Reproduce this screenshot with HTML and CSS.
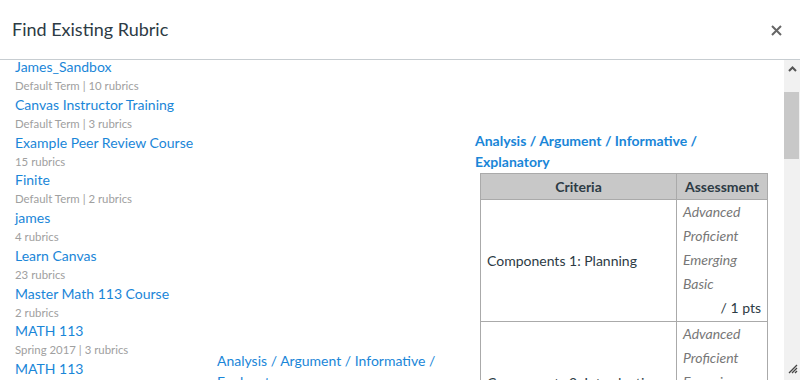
FILE: index.html
```html
<!DOCTYPE html>
<html lang="en">
  <head>
    <meta charset="UTF-8" />
    <meta name="viewport" content="width=device-width, initial-scale=1.0" />
    <title>Find Existing Rubric</title>
    <link rel="stylesheet" href="styles.css">
  </head>
  <body>
    <div class="dialog">
      <div class="dialog-header">
        <h2>Find Existing Rubric</h2>
        <button class="close" title="Close">
          <svg width="11" height="11" viewBox="0 0 11 11">
            <path d="M1 1 L10 10 M10 1 L1 10" stroke="#666" stroke-width="2" />
          </svg>
        </button>
      </div>

      <div class="dialog-body">
        <!-- contexts -->
        <ul class="contexts">
          <li><a href="#">James_Sandbox</a><span class="meta">Default Term | 10 rubrics</span></li>
          <li><a href="#">Canvas Instructor Training</a><span class="meta">Default Term | 3 rubrics</span></li>
          <li><a href="#">Example Peer Review Course</a><span class="meta">15 rubrics</span></li>
          <li><a href="#">Finite</a><span class="meta">Default Term | 2 rubrics</span></li>
          <li><a href="#">james</a><span class="meta">4 rubrics</span></li>
          <li><a href="#">Learn Canvas</a><span class="meta">23 rubrics</span></li>
          <li><a href="#">Master Math 113 Course</a><span class="meta">2 rubrics</span></li>
          <li><a href="#">MATH 113</a><span class="meta">Spring 2017 | 3 rubrics</span></li>
          <li><a href="#">MATH 113</a><span class="meta">Fall 2017 | 3 rubrics</span></li>
        </ul>

        <!-- rubrics in context -->
        <div class="rubrics">
          <a href="#" class="rubric-link">Analysis / Argument / Informative / Explanatory</a>
        </div>

        <!-- preview -->
        <div class="preview">
          <a href="#" class="preview-title">Analysis / Argument / Informative / Explanatory</a>
          <table class="rubric-table">
            <thead>
              <tr>
                <th class="col-criteria">Criteria</th>
                <th class="col-assessment">Assessment</th>
              </tr>
            </thead>
            <tbody>
              <tr>
                <td class="criterion">Components 1: Planning</td>
                <td class="ratings">
                  <div class="rating">Advanced</div>
                  <div class="rating">Proficient</div>
                  <div class="rating">Emerging</div>
                  <div class="rating">Basic</div>
                  <div class="points">/ 1 pts</div>
                </td>
              </tr>
              <tr>
                <td class="criterion">Components 2: Introduction</td>
                <td class="ratings">
                  <div class="rating">Advanced</div>
                  <div class="rating">Proficient</div>
                  <div class="rating">Emerging</div>
                  <div class="rating">Basic</div>
                  <div class="points">/ 1 pts</div>
                </td>
              </tr>
            </tbody>
          </table>
        </div>

        <div class="scrollbar">
          <svg class="arrow-up" width="9" height="6" viewBox="0 0 9 6">
            <path d="M1 5 L4.5 1.5 L8 5" fill="none" stroke="#555" stroke-width="2" />
          </svg>
          <div class="thumb"></div>
          <svg class="grip" width="10" height="10" viewBox="0 0 10 10">
            <path d="M1 9 L9 1 M4 9 L9 4 M7 9 L9 7" stroke="#444" stroke-width="1.3" />
          </svg>
        </div>
      </div>
    </div>
  </body>
</html>
```

FILE: styles.css
```css
* {
  box-sizing: border-box;
}
body {
  margin: 0;
  font-family: Lato, "Open Sans", Arial, sans-serif;
  background-color: #fff;
  color: #2d3b45;
  overflow: hidden;
}
a {
  color: #1a86d8;
  text-decoration: none;
}
.dialog {
  width: 800px;
  height: 380px;
  display: flex;
  flex-direction: column;
  overflow: hidden;
}
.dialog-header {
  height: 60px;
  flex: none;
  display: flex;
  align-items: center;
  justify-content: space-between;
  padding: 0 18px 0 12px;
  border-bottom: 1px solid #c7cdd1;
}
.dialog-header h2 {
  margin: 0 0 1px;
  font-size: 18px;
  font-weight: 400;
  color: #2d3b45;
}
.close {
  background: none;
  border: none;
  padding: 0;
  margin-top: 1px;
  display: flex;
  cursor: pointer;
}
.dialog-body {
  flex: 1;
  display: flex;
  min-height: 0;
}
.contexts {
  width: 205px;
  flex: none;
  list-style: none;
  margin: -3px 0 0;
  padding: 0 0 0 15px;
}
.contexts li {
  display: flex;
  flex-direction: column;
}
.contexts a {
  font-size: 14px;
  line-height: 20px;
  white-space: nowrap;
}
.meta {
  font-size: 11.4px;
  line-height: 17.75px;
  color: #a0a0a0;
  white-space: nowrap;
}
.rubrics {
  width: 265px;
  flex: none;
  padding: 290px 16px 0 12px;
}
.rubric-link {
  font-size: 14px;
  line-height: 21px;
}
.preview {
  flex: 1;
  padding: 70px 16px 0 5px;
}
.preview-title {
  display: block;
  font-size: 14px;
  font-weight: 700;
  line-height: 21px;
}
.rubric-table {
  width: 288px;
  margin: 1px 0 0 5px;
  border-collapse: collapse;
  font-size: 14px;
}
.rubric-table th,
.rubric-table td {
  border: 1px solid #aaa;
}
.rubric-table th {
  background-color: #c8c8c8;
  font-weight: 700;
  color: #2d3b45;
  height: 26px;
  padding: 0 5px;
}
.col-criteria {
  width: 196px;
}
.criterion {
  padding: 0 6px;
  color: #2d3b45;
}
.ratings {
  padding: 0 6px 1px 6px;
}
.rating {
  font-style: italic;
  color: #777;
  line-height: 24px;
}
.points {
  text-align: right;
  line-height: 24px;
  color: #2d3b45;
}
.scrollbar {
  width: 16px;
  flex: none;
  background-color: #f1f1f1;
  position: relative;
}
.arrow-up {
  position: absolute;
  left: 4px;
  top: 6px;
}
.thumb {
  position: absolute;
  left: 0;
  top: 32px;
  width: 15px;
  height: 67px;
  background-color: #c8c8c8;
}
.grip {
  position: absolute;
  left: 4px;
  bottom: 6px;
}
```
